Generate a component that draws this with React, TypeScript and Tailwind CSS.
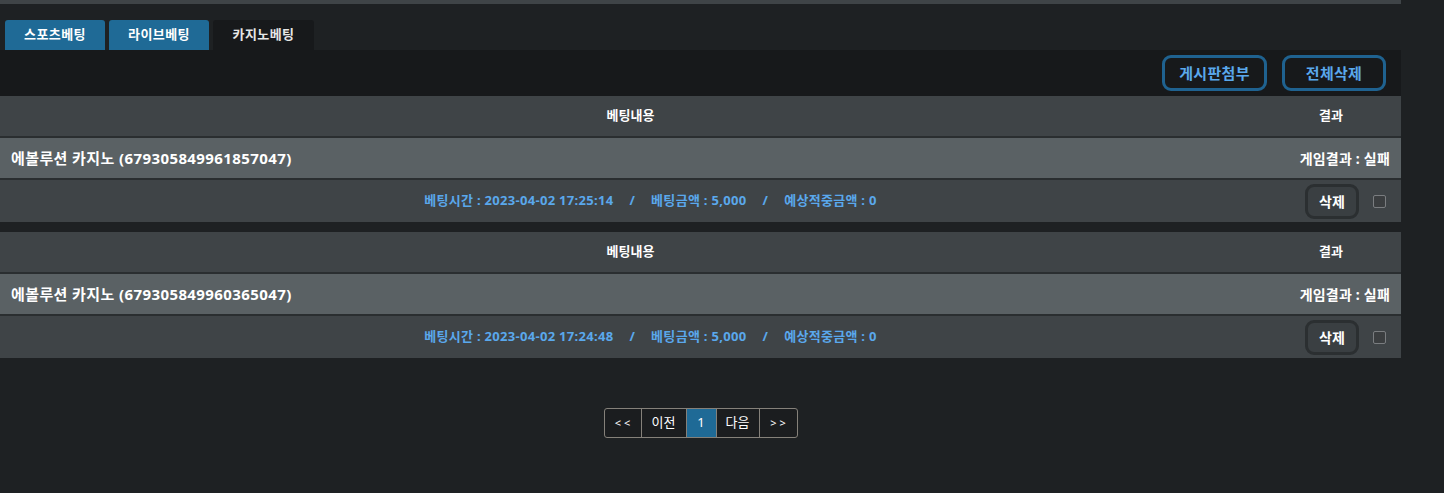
import React from "react";

const bets = [
  { id: "679305849961857047", time: "2023-04-02 17:25:14", amount: "5,000", expect: "0", result: "실패" },
  { id: "679305849960365047", time: "2023-04-02 17:24:48", amount: "5,000", expect: "0", result: "실패" },
];

const tabs = [
  { label: "스포츠베팅", active: false },
  { label: "라이브베팅", active: false },
  { label: "카지노베팅", active: true },
];

function BetBlock({ bet }: { bet: (typeof bets)[number] }) {
  return (
    <div className="flex flex-col gap-[2px] bg-[#2a2e30]">
      <div className="flex h-[40px] items-center bg-[#3f4447] text-[13px] font-bold text-white">
        <div className="flex-1 text-center">베팅내용</div>
        <div className="w-[140px] text-center">결과</div>
      </div>
      <div className="flex h-[40px] items-center bg-[#5a6164] text-white">
        <div className="flex-1 pl-[11px] text-[15px] font-bold tracking-[0.4px]">
          에볼루션 카지노 ({bet.id})
        </div>
        <div className="pr-[11px] text-[14px] font-bold tracking-[0.2px]">게임결과 : {bet.result}</div>
      </div>
      <div className="flex h-[42px] items-center bg-[#3f4447]">
        <div className="flex-1 text-center text-[13px] font-bold tracking-[0.3px] text-[#5aa8ec]">
          베팅시간 : {bet.time}
          <span className="mx-[16px]">/</span>
          베팅금액 : {bet.amount}
          <span className="mx-[16px]">/</span>
          예상적중금액 : {bet.expect}
        </div>
        <div className="flex w-[100px] items-center gap-[14px] pl-[4px]">
          <button className="h-[35px] w-[54px] rounded-[9px] border-[3px] border-[#2b2f31] bg-[#3a3f42] text-[14px] font-bold text-white">
            삭제
          </button>
          <span className="block h-[13px] w-[13px] rounded-[2px] border border-[#7a7d80] bg-[#3b3e40]" />
        </div>
      </div>
    </div>
  );
}

export default function App() {
  return (
    <div
      className="min-h-[493px] bg-[#1e2123]"
      style={{ fontFamily: '"Noto Sans", "Noto Sans CJK KR", sans-serif' }}
    >
      <div className="h-[4px] w-[1401px] bg-[#3f4447]" />

      <div className="mt-[16px] w-[1401px]">
        <div className="flex gap-[4px] pl-[5px]">
          {tabs.map((t) => (
            <div
              key={t.label}
              className={
                t.active
                  ? "flex h-[30px] w-[101px] items-center justify-center rounded-t-[3px] bg-[#17191b] text-[13px] font-bold tracking-[0.4px] text-[#e6e6e6]"
                  : "flex h-[30px] w-[100px] items-center justify-center rounded-t-[3px] bg-[#1f6a96] text-[13px] font-bold tracking-[0.4px] text-white"
              }
            >
              {t.label}
            </div>
          ))}
        </div>

        <div className="flex h-[46px] items-center justify-end gap-[15px] bg-[#17191b] pr-[15px]">
          <button className="h-[36px] w-[105px] rounded-[9px] border-[3px] border-[#1f6290] text-[15px] font-bold tracking-[0.3px] text-[#5aa8ec]">
            게시판첨부
          </button>
          <button className="h-[36px] w-[104px] rounded-[9px] border-[3px] border-[#1f6290] text-[15px] font-bold tracking-[0.3px] text-[#5aa8ec]">
            전체삭제
          </button>
        </div>

        <div className="flex flex-col gap-[10px]">
          {bets.map((b) => (
            <BetBlock key={b.id} bet={b} />
          ))}
        </div>
      </div>

      <div className="mt-[50px] flex w-[1401px] justify-center">
        <div className="flex h-[30px] overflow-hidden rounded-[3px] border border-[#85817a] bg-[#1b1d1f] text-[13px] text-white">
          <span className="flex w-[37px] items-center justify-center border-r border-[#85817a] text-[11px]">&lt; &lt;</span>
          <span className="flex w-[45px] items-center justify-center border-r border-[#85817a]">이전</span>
          <span className="flex w-[29px] items-center justify-center bg-[#1f6a96]">1</span>
          <span className="flex w-[44px] items-center justify-center border-x border-[#85817a]">다음</span>
          <span className="flex w-[37px] items-center justify-center text-[11px]">&gt; &gt;</span>
        </div>
      </div>
    </div>
  );
}
